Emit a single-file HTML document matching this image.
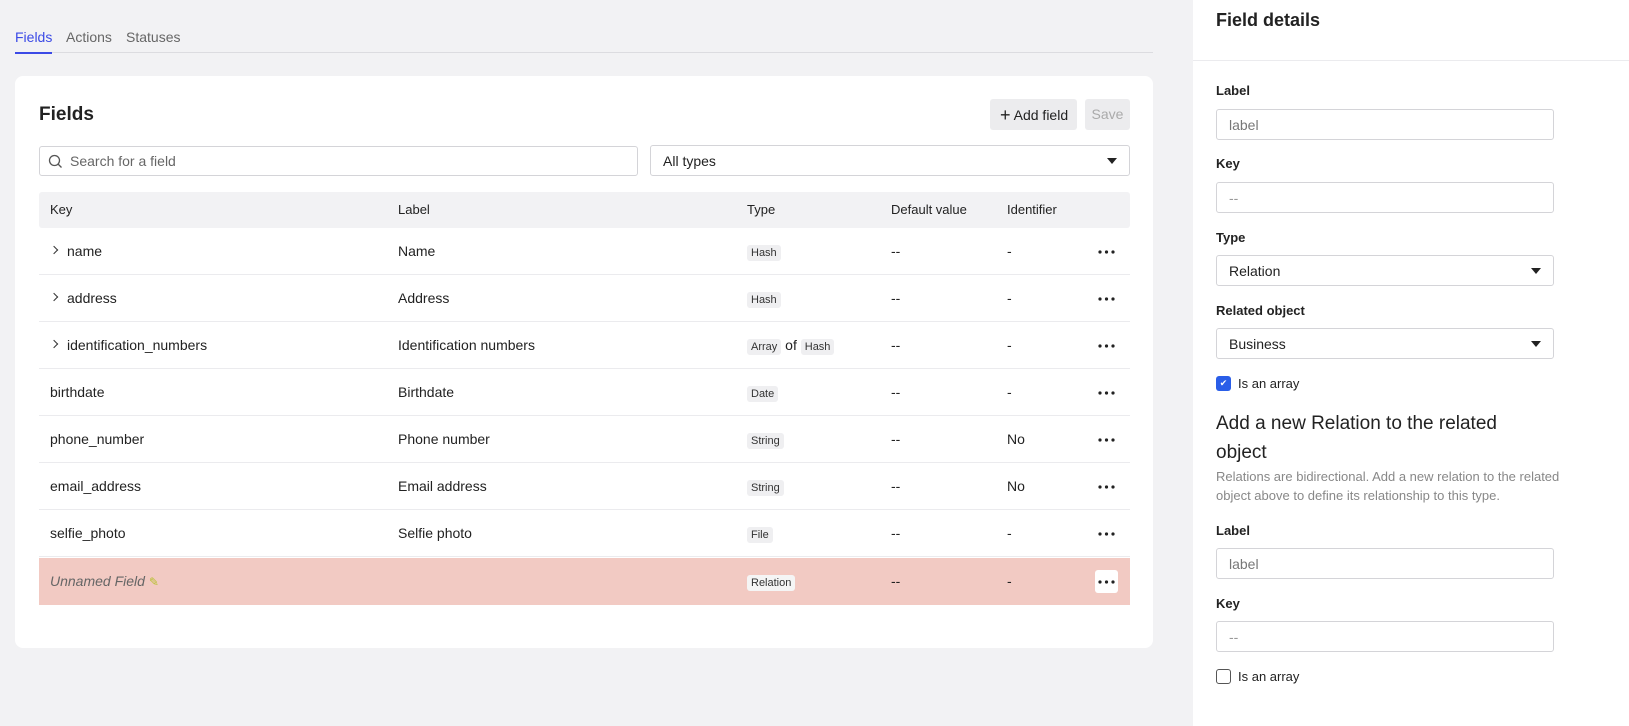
<!DOCTYPE html>
<html><head><style>
*{box-sizing:border-box;margin:0;padding:0}
body{width:1629px;height:726px;background:#f2f2f4;font-family:"Liberation Sans",sans-serif;color:#222;position:relative;overflow:hidden;font-size:14px}
.a{position:absolute}
.tab{position:absolute;top:29px;font-size:14px;color:#666}
.card{position:absolute;left:15px;top:76px;width:1138px;height:572px;background:#fff;border-radius:8px}
.inp{position:absolute;border:1px solid #d4d4d8;border-radius:3px;background:#fff;font-size:14px;color:#222;padding-left:12px;display:flex;align-items:center}
.row{position:absolute;left:39px;width:1091px;height:47px;border-bottom:1px solid #ebebee;font-size:14px}
.row span{position:absolute;top:15px}
.tag{display:inline-block;background:#efeff1;border-radius:3px;font-size:11px;padding:2px 4px;color:#333}
.dots{position:absolute;left:1056px;top:12px;width:23px;height:23px;border-radius:3px}
.dots svg{position:absolute;left:3px;top:10px}
.lbl{position:absolute;left:1216px;font-size:13px;font-weight:bold;color:#222}
.pi{left:1216px;width:338px;height:31px}
.caret{position:absolute;right:12px;top:12px;width:0;height:0;border-left:5px solid transparent;border-right:5px solid transparent;border-top:6px solid #222}
.chev{position:absolute;left:14px;top:19px;width:6px;height:6px;border-right:1.5px solid #333;border-top:1.5px solid #333;transform:rotate(45deg)}
</style></head><body>
<div class="tab" style="left:15px;color:#3b4ae6">Fields</div>
<div class="tab" style="left:66px">Actions</div>
<div class="tab" style="left:126px">Statuses</div>
<div class="a" style="left:15px;top:52px;width:1138px;height:1px;background:#dcdce0"></div>
<div class="a" style="left:15px;top:52px;width:37px;height:2px;background:#3b4ae6"></div>
<div class="card"></div>
<div class="a" style="left:39px;top:104px;font-size:19px;font-weight:bold">Fields</div>
<div class="a" style="left:990px;top:99px;width:87px;height:31px;background:#ececee;border-radius:3px;font-size:14px;line-height:31px;padding-left:10px"><span style="font-size:18px;position:relative;top:1px">+</span> Add field</div>
<div class="a" style="left:1085px;top:99px;width:45px;height:31px;background:#ececee;border-radius:3px;font-size:14px;line-height:31px;text-align:center;color:#aaa">Save</div>
<div class="inp" style="left:39px;top:146px;width:599px;height:30px;color:#666;padding-left:30px">
<svg style="position:absolute;left:8px;top:7px" width="15" height="15" viewBox="0 0 15 15"><circle cx="6.5" cy="6.5" r="5" fill="none" stroke="#555" stroke-width="1.3"/><path d="M10 10l3.5 3.5" stroke="#555" stroke-width="1.3"/></svg>Search for a field</div>
<div class="inp" style="left:650px;top:145px;width:480px;height:31px">All types<div class="caret"></div></div>
<div class="a" style="left:39px;top:192px;width:1091px;height:36px;background:#f2f2f4;border-radius:3px;font-size:13px">
<span class="a" style="left:11px;top:10px">Key</span><span class="a" style="left:359px;top:10px">Label</span><span class="a" style="left:708px;top:10px">Type</span><span class="a" style="left:852px;top:10px">Default value</span><span class="a" style="left:968px;top:10px">Identifier</span></div>

<div class="row" style="top:228px"><div class="chev" style="left:12px"></div><span style="left:28px">name</span><span style="left:359px">Name</span><span style="left:708px"><i class="tag" style="font-style:normal">Hash</i></span><span style="left:852px">--</span><span style="left:968px">-</span><div class="dots"><svg width="17" height="4"><circle cx="2" cy="2" r="1.6" fill="#222"/><circle cx="8.5" cy="2" r="1.6" fill="#222"/><circle cx="15" cy="2" r="1.6" fill="#222"/></svg></div></div>
<div class="row" style="top:275px"><div class="chev" style="left:12px"></div><span style="left:28px">address</span><span style="left:359px">Address</span><span style="left:708px"><i class="tag" style="font-style:normal">Hash</i></span><span style="left:852px">--</span><span style="left:968px">-</span><div class="dots"><svg width="17" height="4"><circle cx="2" cy="2" r="1.6" fill="#222"/><circle cx="8.5" cy="2" r="1.6" fill="#222"/><circle cx="15" cy="2" r="1.6" fill="#222"/></svg></div></div>
<div class="row" style="top:322px"><div class="chev" style="left:12px"></div><span style="left:28px">identification_numbers</span><span style="left:359px">Identification numbers</span><span style="left:708px"><i class="tag" style="font-style:normal">Array</i> of <i class="tag" style="font-style:normal">Hash</i></span><span style="left:852px">--</span><span style="left:968px">-</span><div class="dots"><svg width="17" height="4"><circle cx="2" cy="2" r="1.6" fill="#222"/><circle cx="8.5" cy="2" r="1.6" fill="#222"/><circle cx="15" cy="2" r="1.6" fill="#222"/></svg></div></div>
<div class="row" style="top:369px"><span style="left:11px">birthdate</span><span style="left:359px">Birthdate</span><span style="left:708px"><i class="tag" style="font-style:normal">Date</i></span><span style="left:852px">--</span><span style="left:968px">-</span><div class="dots"><svg width="17" height="4"><circle cx="2" cy="2" r="1.6" fill="#222"/><circle cx="8.5" cy="2" r="1.6" fill="#222"/><circle cx="15" cy="2" r="1.6" fill="#222"/></svg></div></div>
<div class="row" style="top:416px"><span style="left:11px">phone_number</span><span style="left:359px">Phone number</span><span style="left:708px"><i class="tag" style="font-style:normal">String</i></span><span style="left:852px">--</span><span style="left:968px">No</span><div class="dots"><svg width="17" height="4"><circle cx="2" cy="2" r="1.6" fill="#222"/><circle cx="8.5" cy="2" r="1.6" fill="#222"/><circle cx="15" cy="2" r="1.6" fill="#222"/></svg></div></div>
<div class="row" style="top:463px"><span style="left:11px">email_address</span><span style="left:359px">Email address</span><span style="left:708px"><i class="tag" style="font-style:normal">String</i></span><span style="left:852px">--</span><span style="left:968px">No</span><div class="dots"><svg width="17" height="4"><circle cx="2" cy="2" r="1.6" fill="#222"/><circle cx="8.5" cy="2" r="1.6" fill="#222"/><circle cx="15" cy="2" r="1.6" fill="#222"/></svg></div></div>
<div class="row" style="top:510px"><span style="left:11px">selfie_photo</span><span style="left:359px">Selfie photo</span><span style="left:708px"><i class="tag" style="font-style:normal">File</i></span><span style="left:852px">--</span><span style="left:968px">-</span><div class="dots"><svg width="17" height="4"><circle cx="2" cy="2" r="1.6" fill="#222"/><circle cx="8.5" cy="2" r="1.6" fill="#222"/><circle cx="15" cy="2" r="1.6" fill="#222"/></svg></div></div>
<div class="row" style="top:558px;background:#f2cac3;border:none"><span style="left:11px;font-style:italic;color:#666">Unnamed Field <span style="position:static;color:#b8c030;font-style:normal;font-size:12px">✎</span></span><span style="left:708px"><i class="tag" style="font-style:normal;background:#f5f5f5">Relation</i></span><span style="left:852px">--</span><span style="left:968px">-</span><div class="dots" style="background:#fff"><svg width="17" height="4"><circle cx="2" cy="2" r="1.6" fill="#222"/><circle cx="8.5" cy="2" r="1.6" fill="#222"/><circle cx="15" cy="2" r="1.6" fill="#222"/></svg></div></div>

<div class="a" style="left:1193px;top:0;width:436px;height:726px;background:#fff"></div>
<div class="a" style="left:1193px;top:60px;width:436px;height:1px;background:#ebebee"></div>
<div class="a" style="left:1216px;top:10px;font-size:18px;font-weight:bold">Field details</div>
<div class="lbl" style="top:83px">Label</div>
<div class="inp pi" style="top:109px;color:#777">label</div>
<div class="lbl" style="top:156px">Key</div>
<div class="inp pi" style="top:182px;color:#999">--</div>
<div class="lbl" style="top:230px">Type</div>
<div class="inp pi" style="top:255px">Relation<div class="caret"></div></div>
<div class="lbl" style="top:303px">Related object</div>
<div class="inp pi" style="top:328px">Business<div class="caret"></div></div>
<div class="a" style="left:1216px;top:376px;width:15px;height:15px;background:#2a5ee8;border-radius:3px;color:#fff;font-size:9px;text-align:center;line-height:15px">✔</div>
<div class="a" style="left:1238px;top:376px;font-size:13px">Is an array</div>
<div class="a" style="left:1216px;top:409px;font-size:19px;line-height:29px;width:330px">Add a new Relation to the related object</div>
<div class="a" style="left:1216px;top:467px;font-size:13px;line-height:19px;color:#888;width:350px">Relations are bidirectional. Add a new relation to the related object above to define its relationship to this type.</div>
<div class="lbl" style="top:523px">Label</div>
<div class="inp pi" style="top:548px;color:#777">label</div>
<div class="lbl" style="top:596px">Key</div>
<div class="inp pi" style="top:621px;color:#999">--</div>
<div class="a" style="left:1216px;top:669px;width:15px;height:15px;border:1px solid #555;border-radius:3px"></div>
<div class="a" style="left:1238px;top:669px;font-size:13px">Is an array</div>
</body></html>
